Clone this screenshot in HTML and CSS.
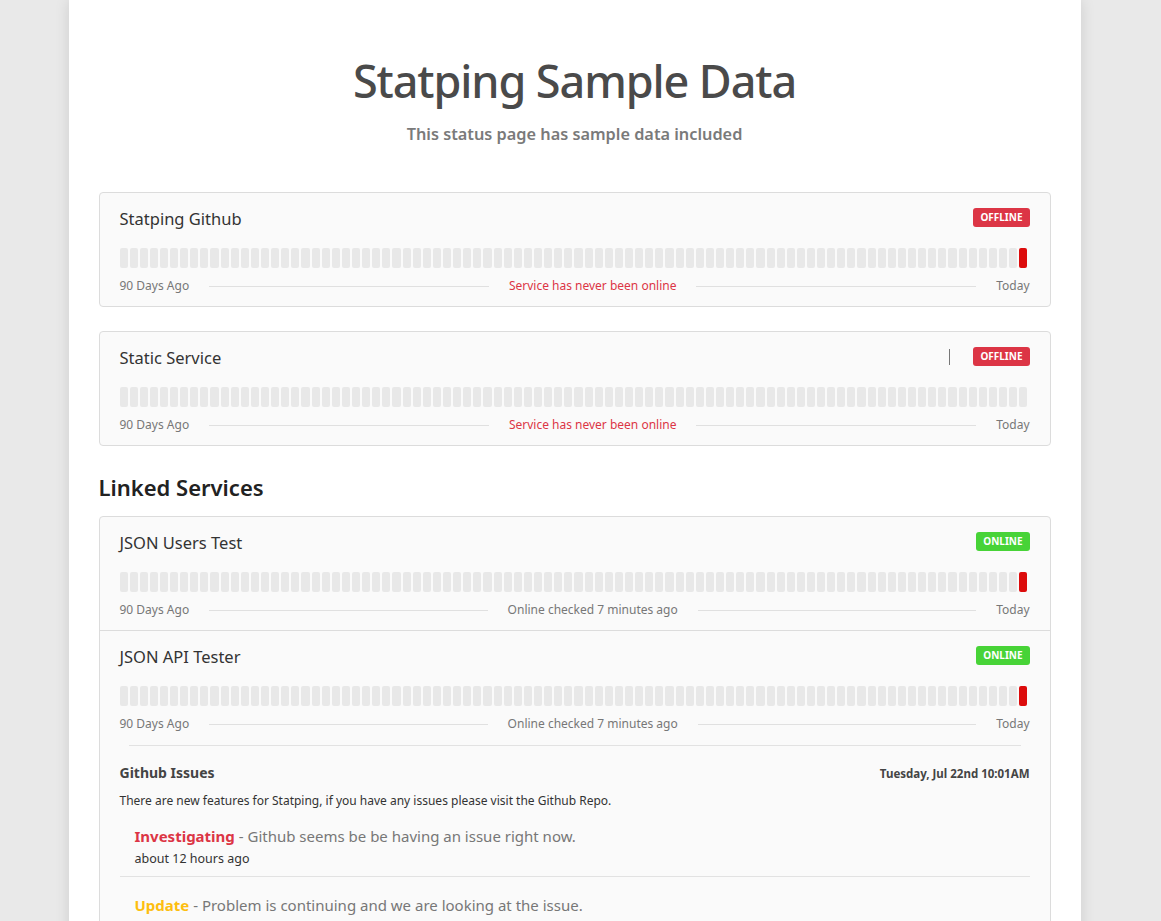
FILE: index.html
```html
<!DOCTYPE html>
<html lang="en">
<head>
    <meta charset="UTF-8">
    <meta name="viewport" content="width=device-width, initial-scale=1.0">
    <title>Statping Sample Data</title>
    <link rel="stylesheet" href="styles.css">
</head>
<body>
    <div class="container">
        <div class="header">
            <h1 class="title">Statping Sample Data</h1>
            <h5 class="subtitle">This status page has sample data included</h5>
        </div>

        <div class="card">
            <div class="service" data-last="down">
                <div class="service-top">
                    <span class="service-name">Statping Github</span>
                    <span class="badge badge-offline">OFFLINE</span>
                </div>
                <div class="bar"></div>
                <div class="service-foot">
                    <span>90 Days Ago</span>
                    <span class="line"></span>
                    <span class="status-text down">Service has never been online</span>
                    <span class="line"></span>
                    <span>Today</span>
                </div>
            </div>
        </div>

        <div class="card">
            <div class="service" data-last="none">
                <div class="service-top">
                    <span class="service-name">Static Service</span>
                    <span class="divider"></span>
                    <span class="badge badge-offline">OFFLINE</span>
                </div>
                <div class="bar"></div>
                <div class="service-foot">
                    <span>90 Days Ago</span>
                    <span class="line"></span>
                    <span class="status-text down">Service has never been online</span>
                    <span class="line"></span>
                    <span>Today</span>
                </div>
            </div>
        </div>

        <h4 class="group-title">Linked Services</h4>

        <div class="card">
            <div class="service" data-last="down">
                <div class="service-top">
                    <span class="service-name">JSON Users Test</span>
                    <span class="badge badge-online">ONLINE</span>
                </div>
                <div class="bar"></div>
                <div class="service-foot">
                    <span>90 Days Ago</span>
                    <span class="line"></span>
                    <span class="status-text">Online checked 7 minutes ago</span>
                    <span class="line"></span>
                    <span>Today</span>
                </div>
            </div>
            <div class="service with-border" data-last="down">
                <div class="service-top">
                    <span class="service-name">JSON API Tester</span>
                    <span class="badge badge-online">ONLINE</span>
                </div>
                <div class="bar"></div>
                <div class="service-foot">
                    <span>90 Days Ago</span>
                    <span class="line"></span>
                    <span class="status-text">Online checked 7 minutes ago</span>
                    <span class="line"></span>
                    <span>Today</span>
                </div>

                <hr class="message-rule">
                <div class="message">
                    <div class="message-head">
                        <span class="message-title">Github Issues</span>
                        <span class="message-date">Tuesday, Jul 22nd 10:01AM</span>
                    </div>
                    <p class="message-desc">There are new features for Statping, if you have any issues please visit the Github Repo.</p>

                    <div class="update">
                        <div class="update-text"><span class="update-type investigating">Investigating</span> - Github seems be be having an issue right now.</div>
                        <div class="update-time">about 12 hours ago</div>
                    </div>
                    <div class="update">
                        <div class="update-text"><span class="update-type updated">Update</span> - Problem is continuing and we are looking at the issue.</div>
                    </div>
                </div>
            </div>
        </div>
    </div>

    <script>
        // fill each uptime bar with 90 day blocks
        document.querySelectorAll('.service').forEach(service => {
            const bar = service.querySelector('.bar');
            const last = service.dataset.last;
            for (let i = 0; i < 90; i++) {
                const block = document.createElement('div');
                block.className = 'block';
                if (i === 89 && last === 'down') {
                    block.className = 'block block-down';
                }
                bar.appendChild(block);
            }
        });
    </script>
</body>
</html>
```

FILE: styles.css
```css
body {
    margin: 0;
    padding-right: 12px;
    background: #e9e9e9;
    font-family: "Noto Sans", "Open Sans", sans-serif;
    color: #333;
}

.container {
    width: 952px;
    margin: 0 auto;
    padding: 0 30px 40px;
    background: #fff;
    box-shadow: 0 0 14px rgba(0, 0, 0, 0.12);
    min-height: 921px;
}

.header {
    text-align: center;
    padding-top: 51px;
    margin-bottom: 46px;
}

.title {
    margin: 0;
    font-size: 45px;
    font-weight: 500;
    letter-spacing: -1.1px;
    line-height: 60px;
    color: #4a4a4a;
}

.subtitle {
    margin: 11px 0 0;
    font-size: 16.3px;
    font-weight: 600;
    line-height: 24px;
    color: #7a7a7a;
}

.card {
    background: #fafafa;
    border: 1px solid #dcdcdc;
    border-radius: 4px;
    margin-bottom: 24px;
}

.service {
    padding: 12px 20px 12px;
}

.service.with-border {
    border-top: 1px solid #dcdcdc;
}

.service-top {
    display: flex;
    align-items: center;
    height: 26px;
}

.service-name {
    flex: 1;
    font-size: 16.5px;
    color: #333;
}

.divider {
    width: 1px;
    height: 16px;
    background: #777;
    margin-right: 23px;
}

.badge {
    font-size: 10px;
    font-weight: 700;
    color: #fff;
    border-radius: 3px;
    padding: 0 7px;
    line-height: 19px;
    margin-top: -2px;
}

.badge-offline {
    background: #dc3545;
}

.badge-online {
    background: #47d337;
}

.bar {
    display: flex;
    gap: 2px;
    height: 20px;
    margin-top: 17px;
    padding-right: 2px;
}

.block {
    flex: 1;
    background: #e8e8e8;
    border-radius: 2px;
}

.block-down {
    background: #dc0c0c;
}

.service-foot {
    display: flex;
    align-items: center;
    margin-top: 10px;
    font-size: 12px;
    line-height: 16px;
    color: #777;
}

.line {
    flex: 1;
    height: 1px;
    background: #e0e0e0;
    margin: 0 20px;
}

.status-text.down {
    color: #dc3545;
}

.group-title {
    margin: 26px 0 14px;
    font-size: 22px;
    font-weight: 600;
    color: #222;
}

.message-rule {
    margin: 13px 9px 0;
    border: 0;
    border-top: 1px solid #e2e2e2;
}

.message-head {
    display: flex;
    justify-content: space-between;
    align-items: baseline;
    margin-top: 17px;
}

.message-title {
    font-size: 14px;
    font-weight: 700;
    color: #444;
}

.message-date {
    font-size: 11.5px;
    font-weight: 700;
    color: #444;
}

.message-desc {
    margin: 10px 0 0;
    font-size: 12px;
    color: #333;
}

.update {
    padding: 17px 15px 9px;
}

.update + .update {
    border-top: 1px solid #e2e2e2;
    padding-top: 18px;
}

.update-text {
    font-size: 15px;
    color: #777;
}

.update-type {
    font-weight: 700;
}

.investigating {
    color: #dc3545;
}

.updated {
    color: #fdbe10;
}

.update-time {
    font-size: 12.5px;
    color: #333;
    margin-top: 4px;
}
```
